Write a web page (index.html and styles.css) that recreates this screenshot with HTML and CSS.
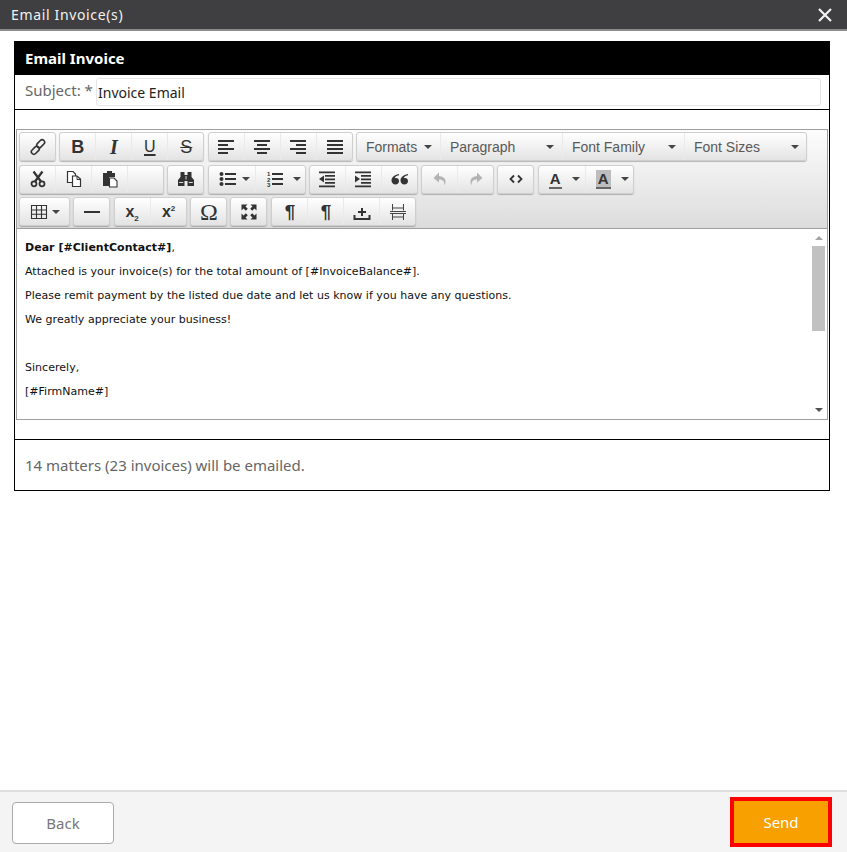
FILE: index.html

```html
<!DOCTYPE html>
<html lang="en">
<head>
    <meta charset="UTF-8">
    <meta name="viewport" content="width=device-width, initial-scale=1.0">
    <title>Email Invoice(s)</title>
    <link rel="stylesheet" href="styles.css">
</head>
<body>
    <div class="titlebar">
        <span class="titlebar-text">Email Invoice(s)</span>
        <svg class="titlebar-close" width="14" height="14" viewBox="0 0 14 14"><path d="M1 1L13 13M13 1L1 13" stroke="#f2f2f2" stroke-width="2.2" fill="none"/></svg>
    </div>

    <div class="content">
        <div class="panel">
            <div class="panel-head">Email Invoice</div>

            <div class="subject-row">
                <label class="subject-label">Subject: *</label>
                <div class="subject-input">Invoice Email</div>
            </div>

            <div class="editor-wrap">
                <div class="editor">
                    <div class="toolbar">
                        <!-- row 1 -->
                        <div class="tb-row">
                            <div class="tb-group">
                                <div class="tb-btn"><svg class="icon" viewBox="0 0 18 18"><g fill="none" stroke="#333" stroke-width="1.6"><rect x="9.2" y="1.2" width="5" height="9" rx="2.5" transform="rotate(45 11.7 5.7)"/><rect x="3.8" y="7.8" width="5" height="9" rx="2.5" transform="rotate(45 6.3 12.3)"/></g></svg></div>
                            </div>
                            <div class="tb-group">
                                <div class="tb-btn glyph glyph-b">B</div>
                                <div class="tb-btn glyph glyph-i">I</div>
                                <div class="tb-btn glyph glyph-u">U</div>
                                <div class="tb-btn glyph glyph-s">S</div>
                            </div>
                            <div class="tb-group">
                                <div class="tb-btn"><svg class="icon" viewBox="0 0 18 18"><path d="M1 2h16v2H1zM1 6h10v2H1zM1 10h16v2H1zM1 14h10v2H1z" fill="#333"/></svg></div>
                                <div class="tb-btn"><svg class="icon" viewBox="0 0 18 18"><path d="M1 2h16v2H1zM4 6h10v2H4zM1 10h16v2H1zM4 14h10v2H4z" fill="#333"/></svg></div>
                                <div class="tb-btn"><svg class="icon" viewBox="0 0 18 18"><path d="M1 2h16v2H1zM7 6h10v2H7zM1 10h16v2H1zM7 14h10v2H7z" fill="#333"/></svg></div>
                                <div class="tb-btn"><svg class="icon" viewBox="0 0 18 18"><path d="M1 2h16v2H1zM1 6h16v2H1zM1 10h16v2H1zM1 14h16v2H1z" fill="#333"/></svg></div>
                            </div>
                            <div class="tb-group">
                                <div class="tb-btn tb-list w-84"><span>Formats</span><i class="caret"></i></div>
                                <div class="tb-btn tb-list w-122"><span>Paragraph</span><i class="caret"></i></div>
                                <div class="tb-btn tb-list w-122"><span>Font Family</span><i class="caret"></i></div>
                                <div class="tb-btn tb-list w-122"><span>Font Sizes</span><i class="caret"></i></div>
                            </div>
                        </div>
                        <!-- row 2 -->
                        <div class="tb-row">
                            <div class="tb-group">
                                <div class="tb-btn"><svg class="icon" viewBox="0 0 18 18"><path d="M4.500 1.500L12 11.500M13.500 1.500L6 11.500" fill="none" stroke="#333" stroke-width="2.200"/><circle cx="5" cy="13.800" r="2.500" fill="none" stroke="#333" stroke-width="1.800"/><circle cx="13" cy="13.800" r="2.500" fill="none" stroke="#333" stroke-width="1.800"/></svg></div>
                                <div class="tb-btn"><svg class="icon" viewBox="0 0 18 18"><path d="M2.500 1.500H8L10.500 4V12.500H2.500Z" fill="#fff" stroke="#333" stroke-width="1.200"/><path d="M7.500 6H12L15.500 9V16.500H7.500Z" fill="#fff" stroke="#333" stroke-width="1.200"/><path d="M12 6V9.500H15.500" fill="none" stroke="#333"/></svg></div>
                                <div class="tb-btn"><svg class="icon" viewBox="0 0 18 18"><path d="M2 3H6V1H11V3H14V7H8V16H2Z" fill="#333"/><path d="M8.500 8H13L16 11V17H8.500Z" fill="#fff" stroke="#333" stroke-width="1.100"/></svg></div>
                                <div class="tb-btn"></div>
                            </div>
                            <div class="tb-group">
                                <div class="tb-btn"><svg class="icon" viewBox="0 0 18 18"><path d="M3.500 2H7.500V5H10.500V2H14.500V7L17 10V16H10.500V11H7.500V16H1V10L3.500 7Z" fill="#333"/><path d="M8.200 6h1.600v3.500H8.200z" fill="#999"/><path d="M2.200 12h4v1h-4zM11.800 12h4v1h-4z" fill="#ddd"/></svg></div>
                            </div>
                            <div class="tb-group">
                                <div class="tb-btn tb-split w-47"><svg class="icon" viewBox="0 0 18 18"><path d="M6 3h11v2H6zM6 8h11v2H6zM6 13h11v2H6z" fill="#333"/><circle cx="2.500" cy="4" r="2" fill="#333"/><circle cx="2.500" cy="9" r="2" fill="#333"/><circle cx="2.500" cy="14" r="2" fill="#333"/></svg><i class="caret"></i></div>
                                <div class="tb-btn tb-split w-50"><svg class="icon" viewBox="0 0 18 18"><path d="M6 3h11v2H6zM6 8h11v2H6zM6 13h11v2H6z" fill="#333"/><g class="list-nums"><text x="1" y="6">1</text><text x="1" y="11.500">2</text><text x="1" y="17">3</text></g></svg><i class="caret"></i></div>
                            </div>
                            <div class="tb-group">
                                <div class="tb-btn"><svg class="icon" viewBox="0 0 18 18"><path d="M1 1.500h16v1.800H1zM7 5h10v1.800H7zM7 8.500h10v1.800H7zM7 12h10v1.800H7zM1 15.500h16v1.800H1z" fill="#333"/><path d="M6 5.500V12.500L1 9Z" fill="#333"/></svg></div>
                                <div class="tb-btn"><svg class="icon" viewBox="0 0 18 18"><path d="M1 1.500h16v1.800H1zM7 5h10v1.800H7zM7 8.500h10v1.800H7zM7 12h10v1.800H7zM1 15.500h16v1.800H1z" fill="#333"/><path d="M1 5.500V12.500L6 9Z" fill="#333"/></svg></div>
                                <div class="tb-btn"><svg class="icon" viewBox="0 0 18 18"><path d="M8 5.200C5 5.500 4 7 3.800 8.200C5.800 7.400 8 8.500 8 11C8 13 6.500 14.500 4.500 14.500C2 14.500 .5 12.800 .5 10.500C.5 7.500 3 5 8 4ZM17 5.200C14 5.500 13 7 12.800 8.200C14.800 7.400 17 8.500 17 11C17 13 15.500 14.500 13.500 14.500C11 14.500 9.500 12.800 9.500 10.500C9.500 7.500 12 5 17 4Z" fill="#333"/></svg></div>
                            </div>
                            <div class="tb-group">
                                <div class="tb-btn"><svg class="icon" viewBox="0 0 18 18"><path d="M8 2.500L2.500 8L8 12.500V9.500C11.500 9.500 13.500 11 13.500 15.500C15.500 11.500 15 6.500 8 6Z" fill="#b3b3b3"/></svg></div>
                                <div class="tb-btn"><svg class="icon" viewBox="0 0 18 18"><path d="M10 2.500L15.500 8L10 12.500V9.500C6.500 9.500 4.500 11 4.500 15.500C2.500 11.500 3 6.500 10 6Z" fill="#b3b3b3"/></svg></div>
                            </div>
                            <div class="tb-group">
                                <div class="tb-btn"><svg class="icon" viewBox="0 0 18 18"><path d="M7 5.500L3.500 9L7 12.500M11 5.500L14.500 9L11 12.500" fill="none" stroke="#333" stroke-width="1.800"/></svg></div>
                            </div>
                            <div class="tb-group">
                                <div class="tb-btn tb-split w-47"><span class="color-a">A</span><i class="caret"></i></div>
                                <div class="tb-btn tb-split w-48"><span class="color-a color-a-bg">A</span><i class="caret"></i></div>
                            </div>
                        </div>
                        <!-- row 3 -->
                        <div class="tb-row">
                            <div class="tb-group">
                                <div class="tb-btn tb-split tb-split-table w-50"><svg class="icon" viewBox="0 0 18 18"><path d="M1.500 2.500h15v13h-15zM1.500 7h15M1.500 11.300h15M6.500 2.500v13M11.500 2.500v13" fill="none" stroke="#333" stroke-width="1.100"/></svg><i class="caret"></i></div>
                            </div>
                            <div class="tb-group">
                                <div class="tb-btn"><svg class="icon" viewBox="0 0 18 18"><path d="M1 8h16v2H1z" fill="#333"/></svg></div>
                            </div>
                            <div class="tb-group">
                                <div class="tb-btn glyph glyph-x"><span>x<sub>2</sub></span></div>
                                <div class="tb-btn glyph glyph-x"><span>x<sup>2</sup></span></div>
                            </div>
                            <div class="tb-group">
                                <div class="tb-btn glyph glyph-omega">Ω</div>
                            </div>
                            <div class="tb-group">
                                <div class="tb-btn"><svg class="icon" viewBox="0 0 18 18"><path d="M1.500 1.500H7.500L5.500 3.500L7.800 5.800L5.800 7.800L3.500 5.500L1.500 7.500ZM16.500 1.500V7.500L14.500 5.500L12.200 7.800L10.200 5.800L12.500 3.500L10.500 1.500ZM1.500 16.500V10.500L3.500 12.500L5.800 10.200L7.800 12.200L5.500 14.500L7.500 16.500ZM16.500 16.500H10.500L12.500 14.500L10.200 12.200L12.200 10.200L14.500 12.500L16.500 10.500Z" fill="#333"/></svg></div>
                            </div>
                            <div class="tb-group">
                                <div class="tb-btn glyph glyph-para">¶</div>
                                <div class="tb-btn glyph glyph-para">¶</div>
                                <div class="tb-btn"><svg class="icon" viewBox="0 0 18 18"><path d="M1.500 12V16H16.500V12" fill="none" stroke="#333" stroke-width="2"/><path d="M8 5h2v8H8zM5 8h8v2H5z" fill="#333"/></svg></div>
                                <div class="tb-btn"><svg class="icon" viewBox="0 0 18 18"><path d="M3.500 1v6.500M14.500 1v6.500M3.500 5h11M3.500 11v6M14.500 11v6M3.500 14h11M1 8.500h16M1 10.500h16" fill="none" stroke="#444" stroke-width="1"/></svg></div>
                            </div>
                        </div>
                    </div>

                    <div class="editor-area">
                        <div class="editor-body">
                            <p><strong>Dear [#ClientContact#]</strong>,</p>
                            <p>Attached is your invoice(s) for the total amount of [#InvoiceBalance#].</p>
                            <p>Please remit payment by the listed due date and let us know if you have any questions.</p>
                            <p>We greatly appreciate your business!</p>
                            <p>&nbsp;</p>
                            <p>Sincerely,</p>
                            <p>[#FirmName#]</p>
                        </div>
                        <div class="scrollbar">
                            <i class="scroll-arrow scroll-up"></i>
                            <div class="scroll-track"><div class="scroll-thumb"></div></div>
                            <i class="scroll-arrow scroll-down"></i>
                        </div>
                    </div>
                </div>
            </div>

            <div class="summary">14 matters (23 invoices) will be emailed.</div>
        </div>
    </div>

    <div class="footer">
        <button class="btn btn-back">Back</button>
        <button class="btn btn-send">Send</button>
    </div>
</body>
</html>
```

FILE: styles.css

```css
* {
    margin: 0;
    padding: 0;
    box-sizing: border-box;
}

body {
    font-family: 'Noto Sans', 'Open Sans', sans-serif;
    background: #fff;
    height: 852px;
    display: flex;
    flex-direction: column;
    overflow: hidden;
}

/* title bar */
.titlebar {
    height: 31px;
    background: #3f3f41;
    border-bottom: 2px solid #8c8c8c;
    display: flex;
    justify-content: space-between;
    align-items: center;
    padding: 0 15px 0 11px;
    flex: none;
}

.titlebar-text {
    color: #f2f2f2;
    font-size: 14px;
    letter-spacing: 0.65px;
}

/* panel */
.content {
    flex: 1;
    padding: 10px 17px 0 14px;
}

.panel {
    border: 1px solid #000;
}

.panel-head {
    height: 34px;
    margin: -1px -1px 0;
    background: #000;
    color: #fff;
    font-size: 15px;
    font-weight: 700;
    line-height: 35px;
    padding-left: 11px;
}

.subject-row {
    height: 35px;
    border-bottom: 1px solid #000;
    display: flex;
    padding: 3px 8px 0 10px;
}

.subject-label {
    width: 71px;
    color: #666;
    font-size: 15px;
    line-height: 24px;
    flex: none;
}

.subject-input {
    flex: 1;
    height: 28px;
    border: 1px solid #e6e6e6;
    border-radius: 3px;
    color: #222;
    font-size: 14px;
    line-height: 28px;
    padding-left: 1px;
}

.editor-wrap {
    padding: 19px 1px 19px;
    border-bottom: 1px solid #000;
}

.editor {
    border: 1px solid #9e9e9e;
    height: 291px;
    display: flex;
    flex-direction: column;
}

/* toolbar */
.toolbar {
    height: 99px;
    flex: none;
    padding: 2px 0 0 2px;
    background: linear-gradient(#fdfdfd, #dcdcdc);
    border-bottom: 1px solid #9e9e9e;
}

.tb-row {
    display: flex;
    height: 29px;
    margin-bottom: 3.5px;
}

.tb-group {
    display: flex;
    height: 29px;
    margin-right: 3.3px;
    border: 1px solid #cfcfcf;
    border-radius: 3px;
    box-shadow: 0 1px 1px rgba(0, 0, 0, 0.25);
    background: linear-gradient(#fff, #e3e3e3);
}

.tb-row:last-child .tb-group:last-child {
    margin-left: 1px;
}

.tb-btn {
    width: 36px;
    height: 27px;
    display: flex;
    align-items: center;
    justify-content: center;
    color: #333;
    border-right: 1px solid #eaeaea;
}

.tb-btn:last-child {
    border-right: 0;
    margin-right: -1px;
}

.w-47 { width: 47px; }
.w-48 { width: 48px; }
.w-50 { width: 50px; }
.w-84 { width: 84px; }
.w-122 { width: 122px; }

.icon {
    width: 18px;
    height: 18px;
    flex: none;
}

.list-nums {
    font-family: 'Liberation Sans', Arial, sans-serif;
    font-size: 6px;
    font-weight: 700;
    fill: #333;
}

.tb-list {
    justify-content: space-between;
    padding: 0 8px 0 9px;
    font-family: 'Liberation Sans', Arial, sans-serif;
    font-size: 14px;
    color: #595959;
}

.tb-split {
    justify-content: space-between;
    padding: 0 5px 0 10px;
}

.tb-split-table {
    padding-right: 10px;
}

.caret {
    display: block;
    width: 0;
    height: 0;
    border-left: 4px solid transparent;
    border-right: 4px solid transparent;
    border-top: 4px solid #444;
    flex: none;
}

.glyph {
    font-family: 'Liberation Sans', Arial, sans-serif;
    font-size: 18px;
    line-height: 1;
}

.glyph-b { font-weight: 700; }

.glyph-i {
    font-family: 'Liberation Serif', serif;
    font-style: italic;
    font-weight: 700;
    font-size: 20px;
}

.glyph-u {
    font-size: 16px;
    text-decoration: underline;
    text-decoration-thickness: 2px;
    text-underline-offset: 2px;
}

.glyph-s {
    font-size: 18px;
    text-decoration: line-through;
    text-decoration-thickness: 1px;
}

.glyph-x {
    font-size: 16px;
    font-weight: 700;
}

.glyph-x sub,
.glyph-x sup {
    font-size: 8px;
    line-height: 0;
}

.glyph-omega {
    font-family: 'Liberation Serif', serif;
    font-size: 24px;
}

.glyph-para {
    font-weight: 700;
    font-size: 19px;
}

.color-a {
    font-family: 'Liberation Sans', Arial, sans-serif;
    font-weight: 700;
    font-size: 15px;
    line-height: 17px;
    color: #333;
    border-bottom: 2px solid #666;
    padding: 0 1px;
}

.color-a-bg {
    background: #bdbdbd;
    padding: 0 2px;
}

/* editor body */
.editor-area {
    flex: 1;
    display: flex;
    min-height: 0;
}

.editor-body {
    flex: 1;
    padding: 7px 0 0 8px;
    font-family: 'DejaVu Sans', Verdana, sans-serif;
    font-size: 11px;
    letter-spacing: 0.025px;
    color: #111;
}

.editor-body p {
    height: 24px;
    line-height: 24px;
}

.scrollbar {
    width: 17px;
    display: flex;
    flex-direction: column;
    align-items: center;
    flex: none;
}

.scroll-arrow {
    display: block;
    width: 0;
    height: 0;
    flex: none;
    border-left: 4px solid transparent;
    border-right: 4px solid transparent;
}

.scroll-up {
    margin-top: 7px;
    border-bottom: 4px solid #a3a3a3;
}

.scroll-down {
    margin-bottom: 7px;
    border-top: 4px solid #505050;
}

.scroll-track {
    flex: 1;
    width: 13px;
    padding-top: 6px;
}

.scroll-thumb {
    height: 85px;
    background: #c1c1c1;
}

/* summary */
.summary {
    height: 50px;
    padding-left: 10px;
    color: #666;
    font-size: 15px;
    line-height: 51px;
}

/* footer */
.footer {
    height: 62px;
    flex: none;
    background: #f4f4f4;
    border-top: 2px solid #dedede;
    display: flex;
    justify-content: space-between;
    align-items: flex-start;
    padding: 5px 15px 0 12px;
}

.btn {
    width: 102px;
    font-family: 'Noto Sans', 'Open Sans', sans-serif;
    font-size: 15px;
}

.btn-back {
    height: 42px;
    margin-top: 5px;
    background: #fff;
    border: 1px solid #aaa;
    border-radius: 4px;
    color: #777;
}

.btn-send {
    height: 50px;
    background: #f7a000;
    border: 4px solid #f00;
    color: #fff;
}
```
